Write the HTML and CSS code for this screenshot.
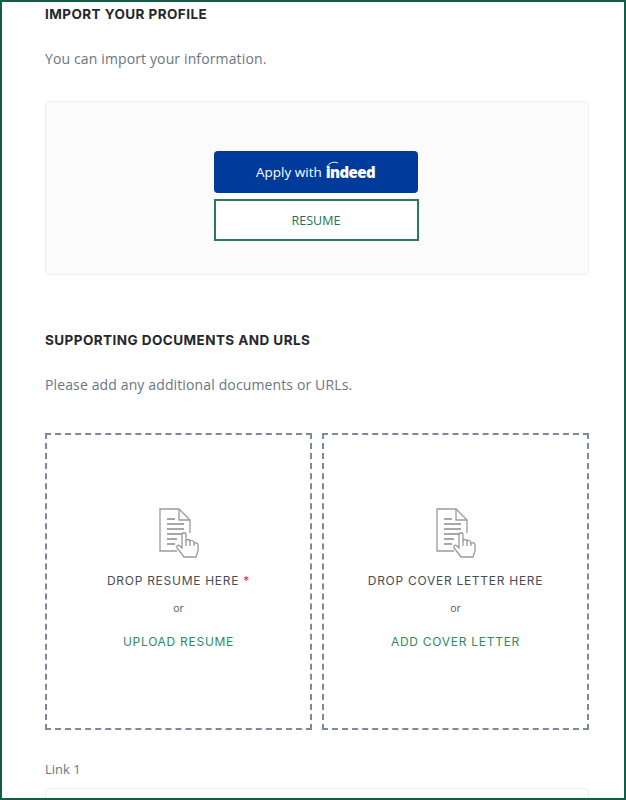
FILE: index.html
```html
<!DOCTYPE html>
<html lang="en">
<head>
<meta charset="utf-8">
<title>Import your profile</title>
<link rel="stylesheet" href="styles.css">
</head>
<body>
<main class="frame">
  <section class="import">
    <h2 class="heading">IMPORT YOUR PROFILE</h2>
    <p class="lead">You can import your information.</p>
    <div class="panel">
      <button class="btn-indeed" type="button">
        <span>Apply with</span>
        <span class="logo">
          <svg class="logo-arc" width="14" height="8" viewBox="0 0 14 8"><path d="M1 7C3 3 7 1 12 3" fill="none" stroke="#fff" stroke-width="1"/></svg>
          <span class="logo-text">indeed</span>
        </span>
      </button>
      <button class="btn-resume" type="button">RESUME</button>
    </div>
  </section>
  <section class="docs">
    <h2 class="heading">SUPPORTING DOCUMENTS AND URLS</h2>
    <p class="lead">Please add any additional documents or URLs.</p>
    <div class="drops">
      <div class="drop">
        <svg class="doc-icon" width="40" height="52" viewBox="0 0 40 52" fill="none" stroke="#9a9a9a" stroke-width="1.3">
          <path d="M18 43H1V1H20L31 12V25"/>
          <path d="M20 1V12H31"/>
          <path d="M8 11H16M8 16H25M8 21H25M8 26H25M8 31H18M8 36H16" stroke="#8a8a8a"/>
          <path fill="#fff" d="M25 49L18 40C17 38 19 36 21 38L23 40V27C23 24 27 24 27 27V33C28 31 31 31 31 33C32 32 35 32 35 35C36 34 39 35 39 37V43L37 49Z"/>
          <path d="M27 33V38M31 33V38M35 35V38"/>
        </svg>
        <div class="drop-label">DROP RESUME HERE <span class="req">*</span></div>
        <div class="or">or</div>
        <a class="drop-link">UPLOAD RESUME</a>
      </div>
      <div class="drop">
        <svg class="doc-icon" width="40" height="52" viewBox="0 0 40 52" fill="none" stroke="#9a9a9a" stroke-width="1.3">
          <path d="M18 43H1V1H20L31 12V25"/>
          <path d="M20 1V12H31"/>
          <path d="M8 11H16M8 16H25M8 21H25M8 26H25M8 31H18M8 36H16" stroke="#8a8a8a"/>
          <path fill="#fff" d="M25 49L18 40C17 38 19 36 21 38L23 40V27C23 24 27 24 27 27V33C28 31 31 31 31 33C32 32 35 32 35 35C36 34 39 35 39 37V43L37 49Z"/>
          <path d="M27 33V38M31 33V38M35 35V38"/>
        </svg>
        <div class="drop-label">DROP COVER LETTER HERE</div>
        <div class="or">or</div>
        <a class="drop-link">ADD COVER LETTER</a>
      </div>
    </div>
    <label class="link-label">Link 1</label>
    <div class="input"></div>
  </section>
</main>
</body>
</html>
```
FILE: styles.css
```css
* { box-sizing: border-box; }
html, body { margin: 0; height: 800px; overflow: hidden; background: #fff; }
.frame {
  height: 800px;
  border: 2px solid #0f5f48;
  padding: 0 35px 0 43px;
  overflow: hidden;
  font-family: "Open Sans", sans-serif;
  background: #fff;
}
.heading {
  margin: 0;
  font-family: Inter, sans-serif;
  font-size: 13.5px;
  line-height: 18px;
  font-weight: 700;
  letter-spacing: 0.44px;
  color: #25272c;
}
.import { padding-top: 3px; }
.lead {
  margin: 26px 0 0;
  font-size: 14px;
  line-height: 20px;
  letter-spacing: 0.13px;
  color: #6b7582;
}
.panel {
  margin-top: 32px;
  height: 174px;
  padding: 49px 2px 0 0;
  background: #fbfbfb;
  border: 1px solid #eeeeee;
  border-radius: 4px;
  display: flex;
  flex-direction: column;
  align-items: center;
  gap: 6px;
}
.btn-indeed {
  width: 204px;
  height: 42px;
  padding: 0;
  margin-right: 1px;
  border: 0;
  border-radius: 4px;
  background: #003a9b;
  color: #fff;
  font-family: "Open Sans", sans-serif;
  font-size: 13.5px;
  display: flex;
  align-items: center;
  justify-content: center;
  gap: 4px;
}
.logo { position: relative; display: inline-block; }
.logo-arc { position: absolute; left: 0; top: -2px; }
.logo-text {
  font-family: "Open Sans", sans-serif;
  font-weight: 800;
  font-size: 15px;
  letter-spacing: -0.6px;
}
.btn-resume {
  width: 205px;
  height: 42px;
  padding: 0;
  background: #fff;
  border: 2px solid #2a7a62;
  color: #1c7258;
  font-family: "Open Sans", sans-serif;
  font-size: 12.5px;
  font-weight: 500;
}
.docs { margin-top: 56px; }
.docs .lead { margin-top: 26px; }
.drops {
  margin-top: 38px;
  display: flex;
  gap: 10px;
}
.drop {
  width: 267px;
  height: 297px;
  border: 2px dashed #7d899c;
  display: flex;
  flex-direction: column;
  align-items: center;
  padding-top: 73px;
}
.doc-icon { display: block; }
.drop-label {
  margin-top: 13px;
  font-family: Inter, sans-serif;
  font-size: 12px;
  line-height: 16px;
  letter-spacing: 0.72px;
  color: #4a4c51;
}
.req { color: #d9342b; }
.or {
  margin-top: 11px;
  font-size: 10.5px;
  line-height: 16px;
  color: #555;
}
.drop-link {
  margin-top: 18px;
  font-family: Inter, sans-serif;
  font-size: 12px;
  line-height: 16px;
  letter-spacing: 0.72px;
  color: #2f8a63;
}
.link-label {
  display: block;
  margin-top: 30px;
  font-size: 13px;
  line-height: 18px;
  color: #6b7582;
}
.input {
  margin-top: 10px;
  height: 40px;
  border: 1px solid #eee;
  border-radius: 4px;
  background: #fff;
}
```
